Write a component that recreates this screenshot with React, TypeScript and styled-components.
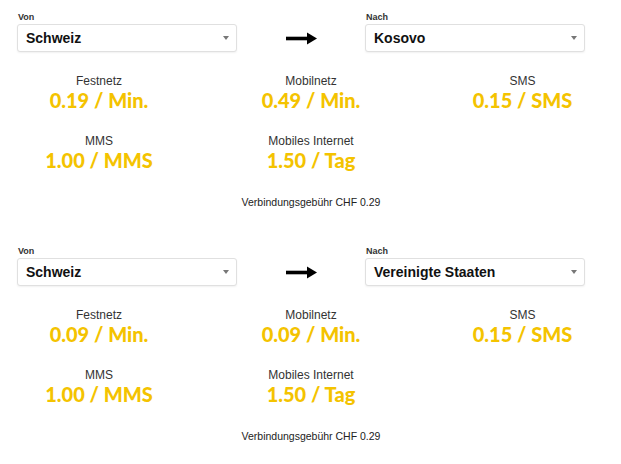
import React from "react";
import styled, { createGlobalStyle } from "styled-components";

const GlobalStyle = createGlobalStyle`
  body {
    margin: 0;
    background: #ffffff;
    font-family: "Liberation Sans", Arial, sans-serif;
    color: #333333;
  }
`;

type Rate = { label: string; value: string };

type Comparison = {
  from: string;
  to: string;
  rates: Rate[];
  fee: string;
};

const comparisons: Comparison[] = [
  {
    from: "Schweiz",
    to: "Kosovo",
    rates: [
      { label: "Festnetz", value: "0.19 / Min." },
      { label: "Mobilnetz", value: "0.49 / Min." },
      { label: "SMS", value: "0.15 / SMS" },
      { label: "MMS", value: "1.00 / MMS" },
      { label: "Mobiles Internet", value: "1.50 / Tag" },
    ],
    fee: "Verbindungsgebühr CHF 0.29",
  },
  {
    from: "Schweiz",
    to: "Vereinigte Staaten",
    rates: [
      { label: "Festnetz", value: "0.09 / Min." },
      { label: "Mobilnetz", value: "0.09 / Min." },
      { label: "SMS", value: "0.15 / SMS" },
      { label: "MMS", value: "1.00 / MMS" },
      { label: "Mobiles Internet", value: "1.50 / Tag" },
    ],
    fee: "Verbindungsgebühr CHF 0.29",
  },
];

function Arrow() {
  return (
    <svg width="31" height="13" viewBox="0 0 31 13">
      <rect x="0" y="4.7" width="22" height="3.6" fill="#000" />
      <polygon points="21,0.5 31,6.5 21,12.5" fill="#000" />
    </svg>
  );
}

function Chevron() {
  return (
    <svg width="6" height="4" viewBox="0 0 6 4">
      <polygon points="0,0 6,0 3,4" fill="#777" />
    </svg>
  );
}

function CountrySelect({ label, value }: { label: string; value: string }) {
  return (
    <Field>
      <FieldLabel>{label}</FieldLabel>
      <SelectBox>
        <span>{value}</span>
        <Chevron />
      </SelectBox>
    </Field>
  );
}

export default function App() {
  return (
    <>
      <GlobalStyle />
      <Page>
        {comparisons.map((c, i) => (
          <Section key={i}>
            <SelectRow>
              <CountrySelect label="Von" value={c.from} />
              <ArrowCell>
                <Arrow />
              </ArrowCell>
              <CountrySelect label="Nach" value={c.to} />
            </SelectRow>
            <RateGrid>
              {c.rates.map((r) => (
                <RateCell key={r.label}>
                  <RateLabel>{r.label}</RateLabel>
                  <RateValue>{r.value}</RateValue>
                </RateCell>
              ))}
              <Fee>{c.fee}</Fee>
            </RateGrid>
          </Section>
        ))}
      </Page>
    </>
  );
}

const Page = styled.div`
  display: flex;
  flex-direction: column;
  gap: 38px;
  padding-top: 12px;
`;

const Section = styled.section`
  display: flex;
  flex-direction: column;
`;

const SelectRow = styled.div`
  display: flex;
  align-items: flex-end;
  padding-left: 17px;
`;

const Field = styled.div`
  display: flex;
  flex-direction: column;
  width: 220px;
`;

const FieldLabel = styled.div`
  font-size: 9px;
  line-height: 11px;
  font-weight: bold;
  color: #333;
  margin-left: 1px;
  margin-bottom: 1px;
`;

const SelectBox = styled.div`
  box-sizing: border-box;
  height: 28px;
  display: flex;
  align-items: center;
  justify-content: space-between;
  padding: 0 7px 0 8px;
  border: 1px solid #e0e0e0;
  border-radius: 3px;
  box-shadow: 0 1px 2px rgba(0, 0, 0, 0.06);
  background: #fff;
  font-size: 14px;
  font-weight: bold;
  color: #111;
`;

const ArrowCell = styled.div`
  width: 128px;
  height: 28px;
  display: flex;
  align-items: center;
  justify-content: center;
`;

const RateGrid = styled.div`
  display: grid;
  grid-template-columns: 198px 226px 1fr;
  row-gap: 23px;
  margin-top: 22px;
`;

const RateCell = styled.div`
  display: flex;
  flex-direction: column;
  align-items: center;
`;

const RateLabel = styled.div`
  font-size: 12px;
  line-height: 14px;
  color: #333;
  margin-bottom: 1px;
`;

const RateValue = styled.div`
  font-family: Lato, "Open Sans", sans-serif;
  font-size: 20px;
  line-height: 22px;
  font-weight: 900;
  color: #f4c300;
`;

const Fee = styled.div`
  grid-column: 2;
  text-align: center;
  font-size: 10.5px;
  line-height: 12px;
  color: #222;
  margin-top: 2px;
`;
